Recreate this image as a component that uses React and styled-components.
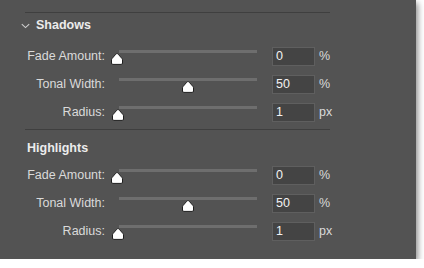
import React from 'react';
import styled, { createGlobalStyle } from 'styled-components';

const Global = createGlobalStyle`
  html, body { margin:0; padding:0; background:#fff; }
  body { font-family:"Liberation Sans", Arial, sans-serif; }
`;

const Panel = styled.div`
  width:416px;
  height:259px;
  box-sizing:border-box;
  background:#535353;
  padding:12px 0 0 25px;
  box-shadow:2px 3px 6px rgba(0,0,0,0.45);
`;

const Group = styled.div`
  width:305px;
`;

const Separator = styled.div`
  height:1px;
  background:#3f3f3f;
`;

const Header = styled.div`
  display:flex;
  align-items:center;
  gap:6px;
  margin-left:${({indent}) => indent}px;
  padding-top:${({top}) => top}px;
  padding-bottom:${({bottom}) => bottom}px;
  line-height:15px;
  font-size:12.5px;
  font-weight:bold;
  color:#ececec;
`;

const Rows = styled.div`
  display:flex;
  flex-direction:column;
  gap:10px;
  padding-bottom:9px;
`;

const Row = styled.div`
  display:grid;
  grid-template-columns:80px 167px 43px auto;
  height:18px;
  align-items:center;
`;

const Label = styled.div`
  text-align:right;
  font-size:12.5px;
  color:#dadada;
  white-space:nowrap;
`;

const Slider = styled.div`
  position:relative;
  height:18px;
  margin-left:6px;
  margin-right:9px;
  align-self:stretch;
`;

const Track = styled.div`
  position:absolute;
  top:4px;
  left:8px;
  width:138px;
  height:3px;
  background:#6e6e6e;
`;

const Thumb = styled.svg`
  position:absolute;
  top:7px;
  width:12px;
  height:12px;
`;

const Field = styled.div`
  box-sizing:border-box;
  height:19px;
  margin-top:1px;
  background:#444444;
  border:1px solid #5f5f5f;
  color:#f2f2f2;
  font-size:12.5px;
  line-height:17px;
  padding-left:3px;
`;

const Unit = styled.div`
  padding-left:4px;
  font-size:12.5px;
  color:#dadada;
`;

const Chevron = () => (
  <svg width="9" height="6" viewBox="0 0 9 6">
    <path d="M0.8 1.2 L4.5 4.6 L8.2 1.2" fill="none" stroke="#cfcfcf" strokeWidth="1.1" />
  </svg>
);

const SliderRow = ({label, value, unit}) => (
  <Row>
    <Label>{label}</Label>
    <Slider>
      <Track />
      <Thumb viewBox="0 0 12 12" style={{left: `${value * 1.42}px`}}>
        <path
          d="M6 0.6 Q6.7 0.6 7.3 1.3 L11 5.6 Q11.5 6.2 11.5 7 L11.5 10 Q11.5 11.4 10.2 11.4 L1.8 11.4 Q0.5 11.4 0.5 10 L0.5 7 Q0.5 6.2 1 5.6 L4.7 1.3 Q5.3 0.6 6 0.6 Z"
          fill="#ffffff"
          stroke="#1e1e1e"
          strokeWidth="1"
        />
      </Thumb>
    </Slider>
    <Field>{value}</Field>
    <Unit>{unit}</Unit>
  </Row>
);

const sections = [
  {
    title: 'Shadows',
    rows: [
      {label: 'Fade Amount:', value: 0, unit: '%'},
      {label: 'Tonal Width:', value: 50, unit: '%'},
      {label: 'Radius:', value: 1, unit: 'px'},
    ],
  },
  {
    title: 'Highlights',
    rows: [
      {label: 'Fade Amount:', value: 0, unit: '%'},
      {label: 'Tonal Width:', value: 50, unit: '%'},
      {label: 'Radius:', value: 1, unit: 'px'},
    ],
  },
];

export default function App() {
  const [shadows, highlights] = sections;
  return (
    <>
      <Global />
      <Panel>
        <Group>
          <Separator />
          <Header indent={-4} top={5} bottom={13}>
            <Chevron />
            {shadows.title}
          </Header>
          <Rows>
            {shadows.rows.map((r) => <SliderRow key={r.label} {...r} />)}
          </Rows>
          <Separator />
          <Header indent={2} top={11} bottom={9}>
            {highlights.title}
          </Header>
          <Rows>
            {highlights.rows.map((r) => <SliderRow key={r.label} {...r} />)}
          </Rows>
        </Group>
      </Panel>
    </>
  );
}
